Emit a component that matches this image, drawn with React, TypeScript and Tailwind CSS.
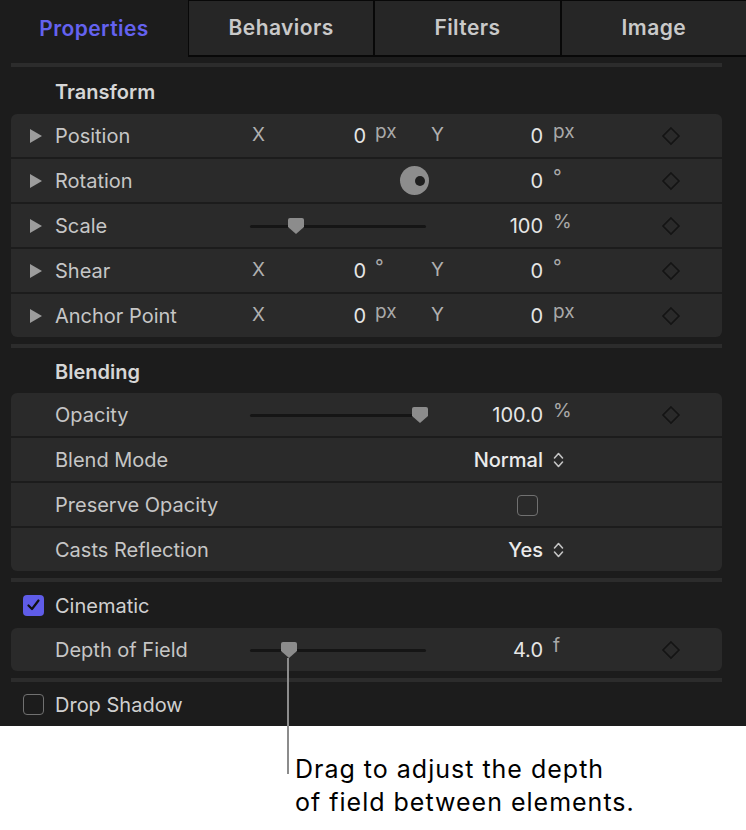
import type { ReactNode } from "react";

function Caret() {
  return (
    <svg width="12" height="14" viewBox="0 0 12 14">
      <path d="M0 0 L12 7 L0 14 Z" fill="#9c9c9c" />
    </svg>
  );
}

function Diamond() {
  return (
    <svg width="20" height="20" viewBox="0 0 20 20">
      <path d="M10 2 L18 10 L10 18 L2 10 Z" fill="none" stroke="#141414" strokeWidth="1.6" />
    </svg>
  );
}

function Stepper() {
  return (
    <svg width="11" height="18" viewBox="0 0 11 18">
      <path d="M1.5 7 L5.5 2.5 L9.5 7" fill="none" stroke="#c4c4c4" strokeWidth="1.6" strokeLinecap="round" strokeLinejoin="round" />
      <path d="M1.5 11 L5.5 15.5 L9.5 11" fill="none" stroke="#c4c4c4" strokeWidth="1.6" strokeLinecap="round" strokeLinejoin="round" />
    </svg>
  );
}

function Slider({ thumb }: { thumb: string }) {
  return (
    <div className="relative h-[16px] w-[176px]">
      <div className="absolute left-0 right-0 top-[7px] h-[3px] rounded-full bg-[#151515]" />
      <svg className={`absolute top-0 ${thumb}`} width="16" height="16" viewBox="0 0 16 16">
        <path d="M2 0 H14 Q16 0 16 2 V9 L8 16 L0 9 V2 Q0 0 2 0 Z" fill="#8c8c8c" />
      </svg>
    </div>
  );
}

function Dial() {
  return (
    <div className="pl-[150px]">
      <div className="flex h-[29px] w-[29px] items-center justify-end rounded-full bg-[#8d8d8d] pr-[4px]">
        <div className="h-[10px] w-[10px] rounded-full bg-[#1f1f1f]" />
      </div>
    </div>
  );
}

function Val({ children, bold }: { children: ReactNode; bold?: boolean }) {
  return (
    <span className={`text-[20px] ${bold ? "font-medium text-[#ebebeb]" : "text-[#e6e6e6]"}`}>
      {children}
    </span>
  );
}

function Unit({ children }: { children: ReactNode }) {
  return <span className="-translate-y-[3px] text-[19px] text-[#a9a9a9]">{children}</span>;
}

function Axis({ children }: { children: ReactNode }) {
  return <span className="-translate-y-[1px] text-[19px] text-[#b0b0b0]">{children}</span>;
}

type RowProps = {
  label: string;
  caret?: boolean;
  mid?: ReactNode;
  value?: ReactNode;
  unit?: ReactNode;
  diamond?: boolean;
};

function Row({ label, caret, mid, value, unit, diamond }: RowProps) {
  return (
    <div className="flex h-[43px] items-center bg-[#2a2a2a] pr-[41px]">
      <div className="flex w-[44px] justify-end pr-[13px]">{caret && <Caret />}</div>
      <div className="w-[195px] pt-[1px] text-[20px] text-[#c6c6c6]">{label}</div>
      <div className="flex w-[176px] items-center">{mid}</div>
      <div className="flex w-[117px] items-center justify-end pt-[1px]">{value}</div>
      <div className="ml-[10px] flex items-center">{unit}</div>
      {diamond && (
        <div className="ml-auto flex">
          <Diamond />
        </div>
      )}
    </div>
  );
}

function XYRow({ label, unit }: { label: string; unit: string }) {
  return (
    <div className="flex h-[43px] items-center bg-[#2a2a2a] pr-[41px]">
      <div className="flex w-[44px] justify-end pr-[13px]">
        <Caret />
      </div>
      <div className="w-[195px] pt-[1px] text-[20px] text-[#c6c6c6]">{label}</div>
      <div className="flex w-[176px] items-center">
        <div className="flex w-[116px] items-center justify-between pl-[2px] pt-[1px]">
          <Axis>X</Axis>
          <Val>0</Val>
        </div>
        <div className="ml-[9px] flex">
          <Unit>{unit}</Unit>
        </div>
      </div>
      <div className="flex w-[117px] items-center justify-between pl-[5px] pt-[1px]">
        <Axis>Y</Axis>
        <Val>0</Val>
      </div>
      <div className="ml-[10px] flex items-center">
        <Unit>{unit}</Unit>
      </div>
      <div className="ml-auto flex">
        <Diamond />
      </div>
    </div>
  );
}

function Separator() {
  return <div className="h-[4px] bg-[#2c2c2c]" />;
}

function Header({ children }: { children: ReactNode }) {
  return <div className="pt-[2px] text-[20px] font-semibold text-[#d6d6d6]">{children}</div>;
}

function Check({ on }: { on?: boolean }) {
  if (on) {
    return (
      <div className="flex h-[21px] w-[21px] items-center justify-center rounded-[4px] bg-[#5f5ce8]">
        <svg width="13" height="12" viewBox="0 0 13 12">
          <path d="M1.5 6.5 L5 10 L11.5 1.5" fill="none" stroke="#111" strokeWidth="2.2" strokeLinecap="round" strokeLinejoin="round" />
        </svg>
      </div>
    );
  }
  return <div className="h-[21px] w-[21px] rounded-[4px] border-[1.5px] border-[#707070]" />;
}

export default function App() {
  return (
    <div className="relative min-h-[830px] w-[746px] bg-white font-[Inter,sans-serif]">
      <div className="bg-[#1c1c1c]">
        {/* tabs */}
        <div className="flex h-[57px]">
          <div className="flex w-[188px] items-center justify-center text-[21px] font-semibold tracking-[0.02em] text-[#6462f0]">
            Properties
          </div>
          <div className="flex flex-1 gap-[2px] bg-[#080808] pb-[2px] pl-[1px] pt-[1px]">
            {["Behaviors", "Filters", "Image"].map((t) => (
              <div
                key={t}
                className="flex flex-1 items-center justify-center bg-[#262626] text-[21px] font-semibold tracking-[0.02em] text-[#c9c9c9]"
              >
                {t}
              </div>
            ))}
          </div>
        </div>

        <div className="ml-[11px] mr-[24px] flex flex-col pt-[6px]">
          <Separator />
          <div className="flex h-[47px] items-center pl-[44px]">
            <Header>Transform</Header>
          </div>
          <div className="flex flex-col gap-[2px] overflow-hidden rounded-[6px] bg-[#1c1c1c]">
            <XYRow label="Position" unit="px" />
            <Row label="Rotation" caret mid={<Dial />} value={<Val>0</Val>} unit={<Unit>°</Unit>} diamond />
            <Row
              label="Scale"
              caret
              mid={<Slider thumb="left-[38px]" />}
              value={<Val>100</Val>}
              unit={<Unit>%</Unit>}
              diamond
            />
            <XYRow label="Shear" unit="°" />
            <XYRow label="Anchor Point" unit="px" />
          </div>

          <div className="h-[7px]" />
          <Separator />
          <div className="flex h-[45px] items-center pl-[44px]">
            <Header>Blending</Header>
          </div>
          <div className="flex flex-col gap-[2px] overflow-hidden rounded-[6px] bg-[#1c1c1c]">
            <Row
              label="Opacity"
              mid={<Slider thumb="left-[162px]" />}
              value={<Val>100.0</Val>}
              unit={<Unit>%</Unit>}
              diamond
            />
            <Row label="Blend Mode" value={<Val bold>Normal</Val>} unit={<Stepper />} />
            <Row
              label="Preserve Opacity"
              value={
                <div className="pr-[5px]">
                  <Check />
                </div>
              }
            />
            <Row label="Casts Reflection" value={<Val bold>Yes</Val>} unit={<Stepper />} />
          </div>

          <div className="h-[7px]" />
          <Separator />
          <div className="flex h-[46px] items-center gap-[11px] pl-[12px]">
            <Check on />
            <span className="pt-[1px] text-[20px] text-[#d0d0d0]">Cinematic</span>
          </div>
          <div className="overflow-hidden rounded-[6px]">
            <Row
              label="Depth of Field"
              mid={<Slider thumb="left-[31px]" />}
              value={<Val>4.0</Val>}
              unit={<Unit>f</Unit>}
              diamond
            />
          </div>

          <div className="h-[7px]" />
          <Separator />
          <div className="flex h-[44px] items-center gap-[11px] pl-[12px]">
            <Check />
            <span className="pt-[2px] text-[20px] text-[#d0d0d0]">Drop Shadow</span>
          </div>
        </div>
      </div>

      {/* callout */}
      <div className="pl-[295px] pt-[27px] text-[25px] leading-[33px] tracking-[0.04em] text-black">
        <div>Drag to adjust the depth</div>
        <div>of field between elements.</div>
      </div>
      <div className="absolute left-[287px] top-[658px] h-[116px] w-[2px] bg-[#8c8c8c]" />
    </div>
  );
}
